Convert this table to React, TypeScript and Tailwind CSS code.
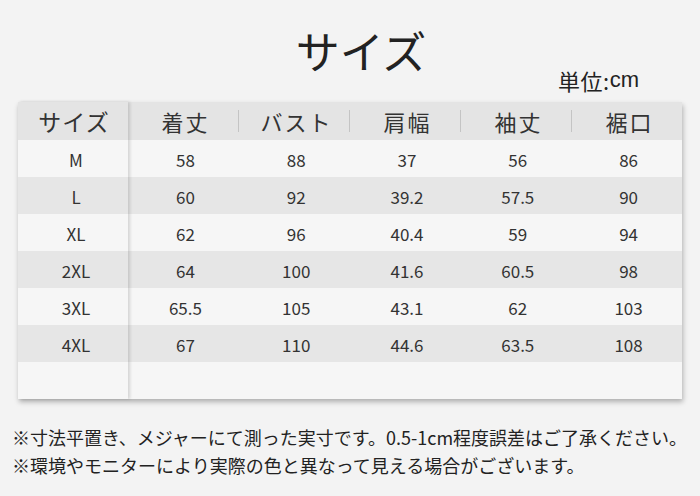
import React from 'react';

const jp = { fontFamily: '"Noto Sans CJK JP", "Noto Sans", sans-serif' };

const headers = ['着丈', 'バスト', '肩幅', '袖丈', '裾口'];

const rows: { size: string; values: string[] }[] = [
  { size: 'M', values: ['58', '88', '37', '56', '86'] },
  { size: 'L', values: ['60', '92', '39.2', '57.5', '90'] },
  { size: 'XL', values: ['62', '96', '40.4', '59', '94'] },
  { size: '2XL', values: ['64', '100', '41.6', '60.5', '98'] },
  { size: '3XL', values: ['65.5', '105', '43.1', '62', '103'] },
  { size: '4XL', values: ['67', '110', '44.6', '63.5', '108'] },
  { size: '', values: ['', '', '', '', ''] },
];

// even rows light, odd rows gray
const rowBg = (i: number) => (i % 2 === 0 ? 'bg-[#f6f6f6]' : 'bg-[#e6e6e6]');

export default function App() {
  return (
    <div className="w-[700px] h-[496px] bg-[#f3f3f3] text-[#333] overflow-hidden" style={jp}>
      <div className="pt-[26px] pl-[22px] text-center text-[44px] leading-[48px] text-[#222]">サイズ</div>

      <div className="flex justify-end pr-[61px] -mt-[8px] text-[22px] leading-[28px] text-[#222]">
        <span className="tracking-[0.5px]">単位:</span>
        <span style={{ fontFamily: '"Liberation Sans", Arial, sans-serif' }}>cm</span>
      </div>

      <div className="mx-[18px] mt-[8px] flex shadow-[1px_3px_5px_rgba(0,0,0,0.28)]">
        {/* size column */}
        <div className="relative z-10 w-[110px] shadow-[2px_0_3px_rgba(0,0,0,0.14)]">
          <div className="h-[38px] bg-[#e4e4e4] flex items-center justify-center text-[23px] tracking-[1px] pl-[2px]">サイズ</div>
          {rows.map((r, i) => (
            <div key={i} className={`h-[37px] ${rowBg(i)} flex items-center justify-center text-[17px] pt-[3px] pl-[6px]`}>
              {r.size}
            </div>
          ))}
        </div>

        <div className="flex-1">
          <div className="h-[38px] bg-[#e4e4e4] flex items-center">
            {headers.map((h, i) => (
              <React.Fragment key={h}>
                {i > 0 && <div className="w-px h-[22px] bg-[#c4c4c4]" />}
                <div className="flex-1 text-center text-[22px] tracking-[2px] pl-[5px]">{h}</div>
              </React.Fragment>
            ))}
          </div>
          {rows.map((r, i) => (
            <div key={i} className={`h-[37px] ${rowBg(i)} flex items-center text-[17px] pt-[3px]`}>
              {r.values.map((v, j) => (
                <div key={j} className="flex-1 text-center pl-[4px]">
                  {v}
                </div>
              ))}
            </div>
          ))}
        </div>
      </div>

      <div className="mt-[24px] pl-[12px] text-[18px] leading-[28px] text-[#222] whitespace-nowrap">
        <p>※寸法平置き、メジャーにて測った実寸です。0.5-1cm程度誤差はご了承ください。</p>
        <p>※環境やモニターにより実際の色と異なって見える場合がございます。</p>
      </div>
    </div>
  );
}
